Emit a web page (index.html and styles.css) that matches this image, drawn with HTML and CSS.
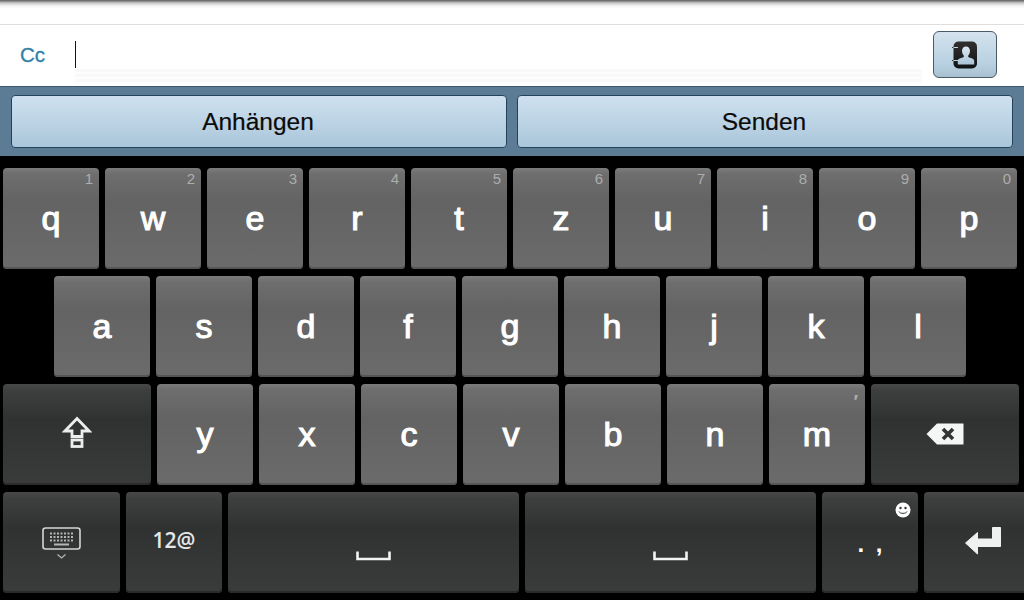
FILE: index.html
```html
<!DOCTYPE html>
<html lang="de">
<head>
    <meta charset="UTF-8">
    <meta name="viewport" content="width=device-width, initial-scale=1.0">
    <title>E-Mail verfassen</title>
    <link rel="stylesheet" href="styles.css">
</head>
<body>
    <div class="top-strip"></div>

    <div class="field-row">
        <div class="field-label">Cc</div>
        <div class="field-input"><div class="cursor"></div><div class="field-shade"></div></div>
        <button class="contact-button" type="button">
            <svg class="icon-contact" width="28" height="28" viewBox="0 0 28 28">
                <defs>
                    <linearGradient id="bookFill" x1="0" y1="0" x2="0" y2="1">
                        <stop offset="0" stop-color="#33302e"/>
                        <stop offset="1" stop-color="#0f1316"/>
                    </linearGradient>
                    <linearGradient id="personFill" x1="0" y1="0" x2="0" y2="1">
                        <stop offset="0" stop-color="#dfe9f1"/>
                        <stop offset="1" stop-color="#a9c3d6"/>
                    </linearGradient>
                </defs>
                <rect x="2.500" y="0.500" width="23.500" height="27" rx="5" fill="url(#bookFill)"/>
                <path d="M15 5.500c-2.500 0-4 2-4 4.600 0 1.900.8 3.500 1.800 4.500v1.500c-1.500.9-6 1.300-6 4v3.400h16.400v-3.400c0-2.700-4.500-3.100-6-4v-1.500c1-1 1.800-2.600 1.800-4.500 0-2.600-1.500-4.600-4-4.600z" fill="url(#personFill)"/>
                <path d="M1 6.500h1.500M1 19.500h1.500" stroke="#333" stroke-width="1.200"/>
                <path d="M2.500 6.500h4.500M2.500 19.500h4.500" stroke="#c9d6df" stroke-width="1.200"/>
            </svg>
        </button>
    </div>

    <div class="action-bar">
        <button class="action-button" type="button">Anhängen</button>
        <button class="action-button" type="button">Senden</button>
    </div>

    <div class="keyboard">
        <div class="key-row">
            <div class="key">q<span class="hint">1</span></div>
            <div class="key">w<span class="hint">2</span></div>
            <div class="key">e<span class="hint">3</span></div>
            <div class="key">r<span class="hint">4</span></div>
            <div class="key">t<span class="hint">5</span></div>
            <div class="key">z<span class="hint">6</span></div>
            <div class="key">u<span class="hint">7</span></div>
            <div class="key">i<span class="hint">8</span></div>
            <div class="key">o<span class="hint">9</span></div>
            <div class="key">p<span class="hint">0</span></div>
        </div>
        <div class="key-row key-row-home">
            <div class="key">a</div>
            <div class="key">s</div>
            <div class="key">d</div>
            <div class="key">f</div>
            <div class="key">g</div>
            <div class="key">h</div>
            <div class="key">j</div>
            <div class="key">k</div>
            <div class="key">l</div>
        </div>
        <div class="key-row">
            <div class="key key-dark key-wide">
                <svg class="icon-shift" width="30" height="32" viewBox="0 0 30 32" fill="none" stroke="#eceeee" stroke-width="2.800">
                    <path d="M15 2.500 L27 15 H20 V20.500 H10 V15 H3 Z"/>
                    <rect x="10" y="24" width="10" height="6.500"/>
                </svg>
            </div>
            <div class="key">y</div>
            <div class="key">x</div>
            <div class="key">c</div>
            <div class="key">v</div>
            <div class="key">b</div>
            <div class="key">n</div>
            <div class="key">m<span class="hint hint-tick">′</span></div>
            <div class="key key-dark key-wide">
                <svg class="icon-back" width="38" height="22" viewBox="0 0 38 22">
                    <path d="M0.500 11 L11 0.500 H37.500 V21.500 H11 Z" fill="#f4f5f5"/>
                    <path d="M17 6 L27 16 M27 6 L17 16" stroke="#333535" stroke-width="3.600" fill="none"/>
                </svg>
            </div>
        </div>
        <div class="key-row">
            <div class="key key-dark key-side">
                <svg width="40" height="32" viewBox="0 0 40 32" fill="none">
                    <rect x="1" y="1" width="37" height="21" rx="2.500" stroke="#d4d6d6" stroke-width="1.600"/>
                    <path d="M8 6.500h23M8 10h23M8 13.500h23" stroke="#b4b6b6" stroke-width="2" stroke-dasharray="2 1.500"/>
                    <path d="M12 17.500h15" stroke="#b4b6b6" stroke-width="2"/>
                    <path d="M15.500 27.500l4 3.500 4-3.500" stroke="#b4b6b6" stroke-width="1.300"/>
                </svg>
            </div>
            <div class="key key-dark key-symbols">12@</div>
            <div class="key key-dark key-space">
                <svg class="icon-space" width="35" height="10" viewBox="0 0 35 10" fill="none">
                    <path d="M1.500 0.500V8H33.500V0.500" stroke="#f2f3f3" stroke-width="2.600"/>
                </svg>
            </div>
            <div class="key key-dark key-space">
                <svg class="icon-space" width="35" height="10" viewBox="0 0 35 10" fill="none">
                    <path d="M1.500 0.500V8H33.500V0.500" stroke="#f2f3f3" stroke-width="2.600"/>
                </svg>
            </div>
            <div class="key key-dark key-punct">. ,
                <svg class="icon-smiley" width="16" height="16" viewBox="0 0 16 16">
                    <circle cx="8" cy="8" r="7.500" fill="#fff"/>
                    <circle cx="5.500" cy="6" r="1.200" fill="#333"/>
                    <circle cx="10.500" cy="6" r="1.200" fill="#333"/>
                    <path d="M4 9.500c1 2.500 7 2.500 8 0" stroke="#333" stroke-width="1" fill="none"/>
                </svg>
            </div>
            <div class="key key-dark key-side">
                <svg class="icon-enter" width="36" height="28" viewBox="0 0 36 28">
                    <path d="M0.500 16 L12.500 5.500 V12 H27.500 V0.500 H35.500 V19.500 H12.500 V27 Z" fill="#eff0f0" stroke="#eff0f0" stroke-linejoin="round"/>
                </svg>
            </div>
        </div>
    </div>
</body>
</html>
```
FILE: styles.css
```css
* {
    box-sizing: border-box;
}

html, body {
    height: 100%;
}

body {
    margin: 0;
    background-color: #000;
    font-family: "Liberation Sans", Arial, sans-serif;
    overflow: hidden;
}

.top-strip {
    height: 25px;
    background-image: linear-gradient(180deg, #5c5c5c 0, #c9c9c9 3px, #f6f6f6 6px, #fff 9px);
    border-bottom: 1px solid #dedede;
}

.field-row {
    display: flex;
    height: 61px;
    background-color: #fff;
}

.field-label {
    width: 75px;
    padding: 18px 0 0 20px;
    color: #2f7fa6;
    font-size: 20.500px;
    line-height: 23px;
    -webkit-text-stroke: 0.3px #2f7fa6;
}

.field-input {
    flex: 1;
    padding-top: 16px;
}

.cursor {
    width: 1px;
    height: 27px;
    background-color: #111;
}

.field-shade {
    height: 15px;
    margin-top: 1px;
    background-image: repeating-linear-gradient(180deg, #f9f9f9 0, #f9f9f9 3px, #fdfdfd 3px, #fdfdfd 5px);
}

.contact-button {
    display: flex;
    justify-content: center;
    align-items: center;
    width: 64px;
    height: 47px;
    margin: 6px 27px 0 11px;
    padding: 0;
    border: 1px solid #4a5a66;
    border-radius: 6px;
    background-image: linear-gradient(180deg, #d4e3ee 0%, #b6cfe0 75%, #a8bfcf 100%);
}

.action-bar {
    display: flex;
    gap: 10px;
    height: 70px;
    padding: 8px 11px 8px;
    background-color: #5b7c94;
    border-top: 1px solid #3c5a70;
}

.action-button {
    flex: 1;
    padding: 0 2px 0 0;
    border: 1px solid #23435a;
    border-radius: 4px;
    background-image: linear-gradient(180deg, #cfe1ef 0%, #aac6da 100%);
    color: #0a0a0a;
    font-family: inherit;
    font-size: 24.500px;
    -webkit-text-stroke: 0.2px #0a0a0a;
}

.keyboard {
    display: flex;
    flex-direction: column;
    gap: 7px;
    padding: 12px 0 0 3px;
}

.key-row {
    display: flex;
    gap: 6px;
}

.key-row-home {
    padding-left: 51px;
}

.key {
    position: relative;
    display: flex;
    flex: none;
    justify-content: center;
    align-items: center;
    width: 96px;
    height: 101px;
    border-radius: 4px;
    background-image: linear-gradient(180deg, #7b7b7b 0, #6e6e6e 6px, #636363 34px, #6b6b6b 100%);
    box-shadow: inset 0 -2px 0 #555;
    color: #fff;
    font-size: 34px;
    -webkit-text-stroke: 1.100px #fff;
}

.key-dark {
    background-image: linear-gradient(180deg, #484848 0, #3e3f3f 6px, #303232 36px, #3a3b3b 100%);
    box-shadow: inset 0 -2px 0 #2a2a2a;
}

.key-wide {
    width: 148px;
}

.key-side {
    width: 117px;
}

.key-space {
    width: 291px;
}

.key-symbols {
    padding-bottom: 5px;
    color: #e6e8e8;
    font-family: "Open Sans", sans-serif;
    font-size: 21px;
    font-weight: 600;
    -webkit-text-stroke: 0;
}

.key-punct {
    padding-top: 2px;
    font-size: 24px;
    font-weight: bold;
    word-spacing: 5px;
    -webkit-text-stroke: 0;
}

.icon-space {
    margin-top: 26px;
}

.icon-shift {
    margin-top: -6px;
}

.icon-back {
    margin-top: -2px;
}

.icon-enter {
    margin-top: -3px;
}

.icon-smiley {
    position: absolute;
    top: 10px;
    right: 7px;
}

.hint {
    position: absolute;
    top: 3px;
    right: 6px;
    color: #adadad;
    font-size: 15px;
    line-height: 16px;
    -webkit-text-stroke: 0;
}

.hint-tick {
    top: 10px;
    right: 8px;
    font-size: 19px;
    font-style: italic;
    font-weight: bold;
}
```
